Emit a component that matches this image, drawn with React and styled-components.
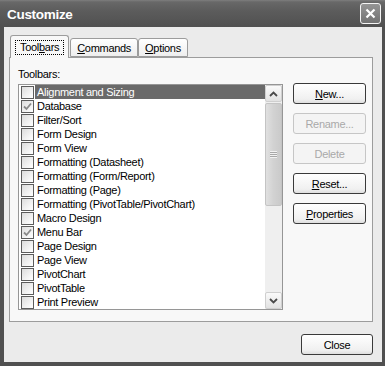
import React from 'react';
import styled, { createGlobalStyle } from 'styled-components';

const GlobalStyle = createGlobalStyle`
  html, body {
    margin: 0;
    padding: 0;
    background: #ffffff;
  }
  body {
    font-family: "Liberation Sans", Arial, sans-serif;
    font-size: 11px;
    letter-spacing: -0.3px;
    color: #000;
  }
`;

const Window = styled.div`
  width: 385px;
  height: 366px;
  display: flex;
  flex-direction: column;
  background: #505050;
`;

const TitleBar = styled.div`
  height: 27px;
  flex: none;
  display: flex;
  align-items: center;
  justify-content: space-between;
  padding: 0 4px 0 7px;
  background: linear-gradient(#7e7e7e 0, #686868 2px, #5c5c5c 40%, #505050 100%);
`;

const Title = styled.div`
  color: #fff;
  font-size: 13.5px;
  font-weight: bold;
  letter-spacing: -0.3px;
  padding-top: 2px;
`;

const CloseX = styled.div`
  width: 19px;
  height: 19px;
  border: 1px solid #f4f4f4;
  border-radius: 3px;
  background: linear-gradient(#959595, #727272);
  display: flex;
  align-items: center;
  justify-content: center;
`;

const Frame = styled.div`
  flex: 1;
  display: flex;
  padding: 0 3px 4px 4px;
`;

const Body = styled.div`
  flex: 1;
  background: #ebebeb;
  display: flex;
  flex-direction: column;
  padding: 8px 9px 0 5px;
`;

const TabRow = styled.div`
  height: 22px;
  display: flex;
  align-items: flex-end;
  padding-left: 1px;
`;

const Tab = styled.div`
  box-sizing: border-box;
  height: ${p => (p.$active ? '23px' : '19px')};
  margin-bottom: ${p => (p.$active ? '-1px' : '0')};
  margin-right: ${p => (p.$active ? '1px' : '0')};
  padding: ${p => (p.$active ? '0 4px' : '0 6px')};
  border: 1px solid #9c9c9c;
  border-bottom: ${p => (p.$active ? 'none' : '1px solid #9c9c9c')};
  border-radius: 3px 3px 0 0;
  background: ${p => (p.$active ? '#f8f8f8' : 'linear-gradient(#ffffff, #eeeeee)')};
  display: flex;
  align-items: center;
  position: relative;
  z-index: ${p => (p.$active ? 1 : 0)};
`;

const Focus = styled.span`
  border: 1px dotted #000;
  padding: 0 4px 1px 4px;
  line-height: 12px;
`;

const Panel = styled.div`
  box-sizing: border-box;
  height: 265px;
  border: 1px solid #9c9c9c;
  background: #f8f8f8;
  display: grid;
  grid-template-columns: 265px 73px;
  column-gap: 10px;
  padding: 10px 6px 0 8px;
  align-items: start;
`;

const ListCol = styled.div`
  display: flex;
  flex-direction: column;
`;

const Label = styled.div`
  line-height: 13px;
  margin-bottom: 3px;
`;

const List = styled.div`
  box-sizing: border-box;
  width: 265px;
  height: 226px;
  border: 1px solid #969696;
  background: #fff;
  display: flex;
`;

const Rows = styled.div`
  flex: 1;
  display: flex;
  flex-direction: column;
  min-width: 0;
`;

const Row = styled.div`
  height: 14px;
  display: flex;
  align-items: center;
`;

const Box = styled.div`
  box-sizing: border-box;
  width: 13px;
  height: 13px;
  margin-left: 2px;
  flex: none;
  border: 1px solid #5c5c5c;
  background: linear-gradient(135deg, #dcdcdc, #f6f6f6 70%, #ffffff);
  display: flex;
  align-items: center;
  justify-content: center;
`;

const RowText = styled.div`
  flex: 1;
  height: 14px;
  line-height: 14px;
  margin-left: 1px;
  padding-left: 2px;
  white-space: nowrap;
  background: ${p => (p.$selected ? '#6a6a6a' : 'transparent')};
  color: ${p => (p.$selected ? '#fff' : '#000')};
`;

const ScrollBar = styled.div`
  width: 17px;
  flex: none;
  background: #efefef;
  display: flex;
  flex-direction: column;
`;

const ScrollBtn = styled.div`
  box-sizing: border-box;
  height: 17px;
  flex: none;
  border: 1px solid #cfcfcf;
  border-radius: 2px;
  background: linear-gradient(#fafafa, #e2e2e2);
  display: flex;
  align-items: center;
  justify-content: center;
`;

const Thumb = styled.div`
  box-sizing: border-box;
  height: 103px;
  margin-top: 1px;
  border: 1px solid #c4c4c4;
  border-radius: 2px;
  background: linear-gradient(90deg, #e0e0e0, #d2d2d2 50%, #cacaca);
  display: flex;
  align-items: center;
  justify-content: center;
`;

const Grip = styled.div`
  width: 7px;
  height: 7px;
  background: repeating-linear-gradient(#f2f2f2 0, #f2f2f2 1px, #a8a8a8 1px, #a8a8a8 2px);
`;

const Track = styled.div`
  flex: 1;
`;

const ButtonCol = styled.div`
  display: flex;
  flex-direction: column;
  gap: 9px;
  padding-top: 15px;
`;

const Button = styled.div`
  box-sizing: border-box;
  width: ${p => p.$width || '73px'};
  height: 21px;
  border: 1px solid ${p => (p.$disabled ? '#c6c6c6' : '#3a3a3a')};
  border-radius: 3px;
  background: ${p => (p.$disabled ? '#f4f4f4' : 'linear-gradient(#ffffff, #f0f0f0 80%, #dedede)')};
  color: ${p => (p.$disabled ? '#a9a9a9' : '#000')};
  display: flex;
  align-items: center;
  justify-content: center;
`;

const Footer = styled.div`
  display: flex;
  justify-content: flex-end;
  padding-top: 12px;
`;

const toolbars = [
  ['Alignment and Sizing', false, true],
  ['Database', true],
  ['Filter/Sort'],
  ['Form Design'],
  ['Form View'],
  ['Formatting (Datasheet)'],
  ['Formatting (Form/Report)'],
  ['Formatting (Page)'],
  ['Formatting (PivotTable/PivotChart)'],
  ['Macro Design'],
  ['Menu Bar', true],
  ['Page Design'],
  ['Page View'],
  ['PivotChart'],
  ['PivotTable'],
  ['Print Preview'],
];

const Check = () => (
  <svg width="9" height="9" viewBox="0 0 9 9">
    <path d="M1 4.5 L3.5 7 L8 1.5" fill="none" stroke="#8a8a8a" strokeWidth="1.8" />
  </svg>
);

const Arrow = ({ down }) => (
  <svg width="9" height="6" viewBox="0 0 9 6">
    <path
      d={down ? 'M1 1 L4.5 4.5 L8 1' : 'M1 5 L4.5 1.5 L8 5'}
      fill="none"
      stroke="#4a4a4a"
      strokeWidth="1.8"
    />
  </svg>
);

export default function App() {
  return (
    <>
      <GlobalStyle />
      <Window>
        <TitleBar>
          <Title>Customize</Title>
          <CloseX>
            <svg width="11" height="11" viewBox="0 0 11 11">
              <path d="M1.5 1.5 L9.5 9.5 M9.5 1.5 L1.5 9.5" stroke="#fff" strokeWidth="2.2" />
            </svg>
          </CloseX>
        </TitleBar>
        <Frame>
          <Body>
            <TabRow>
              <Tab $active>
                <Focus>Tool<u>b</u>ars</Focus>
              </Tab>
              <Tab><span><u>C</u>ommands</span></Tab>
              <Tab><span><u>O</u>ptions</span></Tab>
            </TabRow>
            <Panel>
              <ListCol>
                <Label>Toolbars:</Label>
                <List>
                  <Rows>
                    {toolbars.map(([name, checked, selected]) => (
                      <Row key={name}>
                        <Box>{checked && <Check />}</Box>
                        <RowText $selected={selected}>{name}</RowText>
                      </Row>
                    ))}
                  </Rows>
                  <ScrollBar>
                    <ScrollBtn><Arrow /></ScrollBtn>
                    <Thumb><Grip /></Thumb>
                    <Track />
                    <ScrollBtn><Arrow down /></ScrollBtn>
                  </ScrollBar>
                </List>
              </ListCol>
              <ButtonCol>
                <Button><span><u>N</u>ew...</span></Button>
                <Button $disabled>Rename...</Button>
                <Button $disabled>Delete</Button>
                <Button><span><u>R</u>eset...</span></Button>
                <Button><span><u>P</u>roperties</span></Button>
              </ButtonCol>
            </Panel>
            <Footer>
              <Button $width="72px">Close</Button>
            </Footer>
          </Body>
        </Frame>
      </Window>
    </>
  );
}
